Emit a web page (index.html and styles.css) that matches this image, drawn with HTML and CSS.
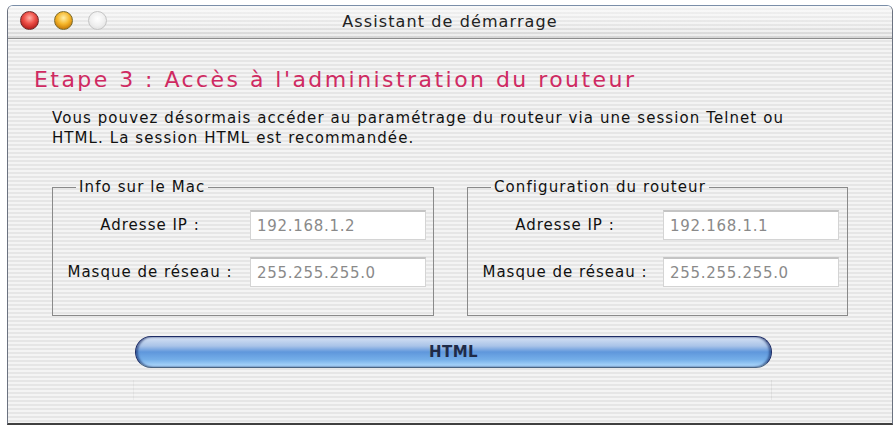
FILE: index.html
```html
<!DOCTYPE html>
<html lang="fr">
<head>
<meta charset="utf-8">
<title>Assistant de démarrage</title>
<link rel="stylesheet" href="styles.css">
</head>
<body>
<div class="window">
  <div class="titlebar">
    <div class="lights">
      <span class="light red"></span>
      <span class="light yellow"></span>
      <span class="light grey"></span>
    </div>
    <div class="title">Assistant de démarrage</div>
  </div>
  <div class="content">
    <h1 class="heading">Etape 3 : Accès à l'administration du routeur</h1>
    <p class="intro">Vous pouvez désormais accéder au paramétrage du routeur via une session Telnet ou<br>HTML. La session HTML est recommandée.</p>
    <div class="groups">
      <fieldset class="group group-mac">
        <legend>Info sur le Mac</legend>
        <div class="rows">
          <span class="label">Adresse IP :</span><span class="field">192.168.1.2</span>
          <span class="label">Masque de réseau :</span><span class="field">255.255.255.0</span>
        </div>
      </fieldset>
      <fieldset class="group group-router">
        <legend>Configuration du routeur</legend>
        <div class="rows">
          <span class="label">Adresse IP :</span><span class="field">192.168.1.1</span>
          <span class="label">Masque de réseau :</span><span class="field">255.255.255.0</span>
        </div>
      </fieldset>
    </div>
    <div class="button-row">
      <div class="pill-button">HTML</div>
    </div>
    <div class="progress"></div>
  </div>
</div>
</body>
</html>
```

FILE: styles.css
```css
html, body {
  margin: 0;
  padding: 0;
  background: #ffffff;
}
body {
  font-family: "DejaVu Sans", "Liberation Sans", sans-serif;
  color: #1a1a1a;
}
.window {
  margin: 5px 0 0 7px;
  width: 884px;
  height: 417px;
  border: 1px solid #6b7280;
  border-top-color: #7a8ea8;
  border-bottom: 2px solid #404040;
  border-radius: 6px 6px 0 0;
  overflow: hidden;
  background: repeating-linear-gradient(to bottom, #f4f4f4 0, #f4f4f4 2px, #e6e6e6 2px, #e6e6e6 4px);
  display: flex;
  flex-direction: column;
}
.titlebar {
  position: relative;
  height: 32px;
  flex: none;
  border-bottom: 1px solid #8c8c8c;
  background:
    repeating-linear-gradient(to bottom, rgba(255,255,255,0.55) 0, rgba(255,255,255,0.55) 2px, rgba(0,0,0,0) 2px, rgba(0,0,0,0) 4px),
    linear-gradient(to bottom, #f2f2f2 0%, #e6e6e6 60%, #d4d4d4 100%);
  display: flex;
  align-items: center;
  justify-content: center;
}
.lights {
  position: absolute;
  left: 12px;
  top: 5px;
  display: flex;
  gap: 15px;
}
.light {
  width: 19px;
  height: 19px;
  border-radius: 50%;
  box-sizing: border-box;
}
.light.red {
  background: radial-gradient(circle at 50% 35%, #ffb2a8 0%, #f0524a 40%, #b51d1a 80%, #7a1010 100%);
  border: 1px solid #6e2a2a;
}
.light.yellow {
  background: radial-gradient(circle at 50% 35%, #fff0a8 0%, #f5b62a 45%, #c77a08 80%, #7a5a10 100%);
  border: 1px solid #7a6a2a;
}
.light.grey {
  background: radial-gradient(circle at 50% 40%, #ffffff 0%, #f0f0f0 50%, #d8d8d8 100%);
  border: 1px solid #c4c4c4;
}
.title {
  font-size: 16px;
  letter-spacing: 1.1px;
  color: #222;
  margin-top: -1px;
}
.content {
  flex: 1;
  padding: 28px 0 0 26px;
  display: flex;
  flex-direction: column;
}
.heading {
  margin: 0;
  font-weight: normal;
  font-size: 22px;
  letter-spacing: 2.45px;
  line-height: 26px;
  color: #cf2a62;
}
.intro {
  margin: 15px 0 0 18px;
  font-size: 15px;
  letter-spacing: 1.08px;
  line-height: 20px;
  color: #111;
}
.groups {
  display: flex;
  gap: 33px;
  margin: 30px 0 0 18px;
}
.group {
  margin: 0;
  border: 1px solid #8a8a8a;
  height: 138px;
  box-sizing: border-box;
  padding: 14px 0 0 7px;
  min-width: 0;
}
.group-mac {
  width: 382px;
}
.group-router {
  width: 381px;
}
.group legend {
  font-size: 15px;
  letter-spacing: 1.1px;
  color: #111;
  padding: 0 3px;
  margin-left: 16px;
  line-height: 18px;
}
.rows {
  display: grid;
  grid-template-columns: 180px 176px;
  column-gap: 10px;
  row-gap: 17px;
  align-items: center;
}
.group-router .rows {
  column-gap: 8px;
}
.label {
  text-align: center;
  font-size: 15px;
  letter-spacing: 1px;
  color: #111;
}
.field {
  height: 30px;
  box-sizing: border-box;
  background: #ffffff;
  border: 1px solid #d4d4d4;
  border-top: 2px solid #c4c4c4;
  padding: 4px 0 0 6px;
  font-size: 15px;
  letter-spacing: 0.7px;
  color: #8a8a8a;
  line-height: 21px;
}
.button-row {
  margin: 20px 0 0 101px;
}
.pill-button {
  width: 637px;
  height: 32px;
  box-sizing: border-box;
  border-radius: 16px;
  border: 1px solid #1e2d66;
  border-bottom-color: #4a6480;
  background:
    linear-gradient(to bottom, #d6e2f4 0%, #a9c3e8 30%, #5f97dc 50%, #74aee8 75%, #b2dcfd 100%);
  box-shadow: inset 2px 0 2px rgba(10,30,90,0.5), inset -2px 0 2px rgba(10,30,90,0.5);
  text-align: center;
  font-size: 15px;
  font-weight: bold;
  letter-spacing: 0.4px;
  line-height: 30px;
  color: #1f2b48;
}
.progress {
  margin: 12px 0 0 99px;
  width: 639px;
  height: 20px;
  box-sizing: border-box;
  border-left: 1px solid rgba(0,0,0,0.04);
  border-right: 1px solid rgba(0,0,0,0.05);
}
```
